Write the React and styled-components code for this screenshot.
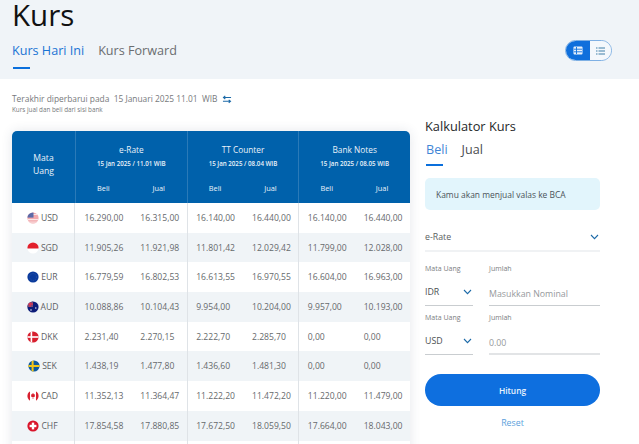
import React from 'react';
import styled, { createGlobalStyle } from 'styled-components';

const GlobalStyle = createGlobalStyle`
	html, body {
		margin: 0;
		height: 444px;
		overflow: hidden;
		background: #fff;
		font-family: 'Open Sans', 'Liberation Sans', sans-serif;
	}
	* { box-sizing: border-box; }
`;

const Page = styled.div`
	height: 444px;
	overflow: hidden;
`;

const Header = styled.header`
	height: 79px;
	background: #f0f4f8;
	padding: 0 27px 0 12px;
	display: flex;
	justify-content: space-between;
	align-items: flex-start;
`;

const HeaderLeft = styled.div`
	display: flex;
	flex-direction: column;
`;

const Title = styled.h1`
	margin: -2px 0 8px;
	font-size: 29.5px;
	line-height: 34px;
	font-weight: 400;
	color: #111;
`;

const Tabs = styled.nav`
	display: flex;
	gap: 14px;
	height: 37px;
`;

const Tab = styled.div`
	font-size: 12.6px;
	line-height: 22px;
	color: ${(p) => (p.$active ? '#1a73d4' : '#6a6d70')};
	position: relative;
	&::after {
		content: '';
		display: ${(p) => (p.$active ? 'block' : 'none')};
		position: absolute;
		left: 1px;
		top: 27px;
		width: 17px;
		height: 2px;
		background: #0a6fdc;
	}
`;

const ViewToggle = styled.div`
	display: flex;
	width: 47px;
	height: 21px;
	border: 1px solid #7fb0e4;
	border-radius: 11px;
	overflow: hidden;
	margin-top: 40px;
`;

const ViewButton = styled.div`
	width: 24px;
	display: flex;
	align-items: center;
	justify-content: center;
	background: ${(p) => (p.$active ? '#0f6fdc' : '#f4f8fc')};
	flex: ${(p) => (p.$active ? '0 0 24px' : '1')};
`;

const Main = styled.main`
	display: flex;
	padding: 14px 0 0 12px;
`;

const LeftColumn = styled.section`
	width: 398px;
	flex: none;
`;

const UpdatedLine = styled.div`
	display: flex;
	align-items: center;
	font-size: 8.4px;
	line-height: 12px;
	color: #77797c;
`;

const SwapIcon = styled.svg`
	width: 10px;
	height: 9px;
	margin-left: 5px;
`;

const SubNote = styled.div`
	font-size: 6.3px;
	line-height: 9px;
	color: #77797c;
	margin-bottom: 17px;
`;

const TableCard = styled.div`
	border-radius: 5px 5px 0 0;
	overflow: hidden;
	box-shadow: 0 0 12px rgba(40, 60, 90, 0.12);
`;

const RateTable = styled.table`
	width: 398px;
	table-layout: fixed;
	border-collapse: separate;
	border-spacing: 0;
`;

const HeadCell = styled.th`
	background: #0061ab;
	color: #eaf2fa;
	font-weight: 400;
	padding: 0;
	font-size: 8.6px;
	vertical-align: middle;
	text-align: center;
	border-left: ${(p) => (p.$divider ? '1px solid #2a7ab8' : 'none')};
`;

const GroupTitle = styled.div`
	font-size: 8.3px;
	line-height: 12px;
	padding-top: 13px;
`;

const GroupDate = styled.div`
	font-size: 6.2px;
	line-height: 9px;
	margin-top: 2.5px;
	font-weight: 600;
	height: 12.5px;
`;

const SideHeading = styled.div`
	font-size: 8.6px;
	line-height: 13px;
	padding-bottom: 4px;
`;

const SubHead = styled(HeadCell)`
	height: 32px;
	font-size: 7.4px;
	padding-top: 2px;
`;

const Row = styled.tr`
	height: 29.7px;
	background: ${(p) => (p.$alt ? '#f0f4f7' : '#fff')};
`;

const CurrencyCell = styled.td`
	padding: 0;
	border-right: 1px solid #dfe3e7;
`;

const CurrencyInner = styled.div`
	display: flex;
	align-items: center;
	justify-content: center;
	gap: 2px;
	font-size: 8.6px;
	color: #5d6064;
	padding-right: 1px;
`;

const ValueCell = styled.td`
	padding: 0 0 0 ${(p) => (p.$divider ? 8.5 : 9.5)}px;
	font-size: 8.6px;
	color: #66696c;
	text-align: left;
	white-space: nowrap;
	border-left: ${(p) => (p.$divider ? '1px solid #dfe3e7' : 'none')};
`;

const Calculator = styled.aside`
	width: 175px;
	margin-left: 15px;
	padding-top: 24px;
`;

const CalcTitle = styled.h2`
	margin: 0;
	font-size: 12.8px;
	line-height: 18px;
	font-weight: 400;
	color: #26282a;
`;

const CalcTabs = styled.div`
	display: flex;
	gap: 14px;
	margin-top: 5px;
	height: 26px;
	padding-left: 1px;
`;

const CalcTab = styled.div`
	font-size: 12.6px;
	line-height: 20px;
	color: ${(p) => (p.$active ? '#3f86d6' : '#4b4d50')};
	position: relative;
	&::after {
		content: '';
		display: ${(p) => (p.$active ? 'block' : 'none')};
		position: absolute;
		left: 0;
		top: 24px;
		width: 17px;
		height: 2px;
		background: #0a6fdc;
	}
`;

const InfoBox = styled.div`
	margin-top: 12px;
	height: 32px;
	padding-left: 11px;
	display: flex;
	align-items: center;
	background: #e2f5fc;
	border-radius: 5px;
	font-size: 8.45px;
	color: #4a5359;
`;

const RateSelect = styled.div`
	margin-top: 15px;
	height: 27px;
	border-bottom: 2px solid #f0f2f4;
	display: flex;
	justify-content: space-between;
	align-items: center;
	padding: 0 0 2px;
	font-size: 8.8px;
	color: #5b5e61;
`;

const Chevron = styled.svg`
	width: 9px;
	height: 6px;
	margin-right: 1px;
`;

const CalcRow = styled.div`
	display: grid;
	grid-template-columns: 48px 111px;
	column-gap: 16px;
	margin-top: ${(p) => p.$top}px;
`;

const FieldLabel = styled.div`
	font-size: 7px;
	line-height: 10px;
	color: #7b7e81;
`;

const CurrencySelect = styled.div`
	height: 32px;
	padding: 5px 0 0;
	border-bottom: 1px solid #c9cdd0;
	display: flex;
	justify-content: space-between;
	align-items: center;
	font-size: 8.8px;
	color: #4c4f52;
`;

const AmountField = styled.div`
	height: 32px;
	padding-top: 14px;
	border-bottom: ${(p) => (p.$light ? '2px solid #e2e4e6' : '1px solid #c9cdd0')};
	font-size: 8.8px;
	line-height: 12px;
	color: #96999c;
`;

const SubmitButton = styled.button`
	display: block;
	width: 175px;
	height: 32px;
	margin-top: 19px;
	border: 0;
	border-radius: 16px;
	background: #0e6fdf;
	color: #eaf3fd;
	font-family: inherit;
	font-size: 8.4px;
	font-weight: 600;
`;

const ResetLink = styled.div`
	margin-top: 11px;
	text-align: center;
	font-size: 8.8px;
	line-height: 12px;
	color: #5b9fdc;
`;

const FlagSvg = styled.svg`
	width: 12px;
	height: 12px;
	flex: none;
`;

const flags = {
	USD: (
		<>
			<rect width="12" height="12" fill="#f2a9ad" />
			<rect y="2" width="12" height="1" fill="#fbe6e6" />
			<rect y="7" width="12" height="1.2" fill="#fbe6e6" />
			<rect y="9.6" width="12" height="1" fill="#fbe6e6" />
			<rect width="6.5" height="5.6" fill="#5b6aa8" />
		</>
	),
	SGD: (
		<>
			<rect width="12" height="12" fill="#fff" />
			<rect width="12" height="6.5" fill="#e2202c" />
		</>
	),
	EUR: (
		<>
			<rect width="12" height="12" fill="#0a3a9c" />
			<circle cx="6" cy="6" r="3.4" fill="none" stroke="#2c55a8" strokeWidth="1" strokeDasharray="1 1" />
		</>
	),
	AUD: (
		<>
			<rect width="12" height="12" fill="#0c1c78" />
			<rect width="6" height="6" fill="#7a4a78" />
			<rect y="2.4" width="6" height="1.2" fill="#e8324a" />
			<rect x="2.4" width="1.2" height="6" fill="#e8324a" />
			<circle cx="8.8" cy="7" r="0.8" fill="#e6e6f0" />
			<circle cx="4" cy="9" r="0.8" fill="#e6e6f0" />
		</>
	),
	DKK: (
		<>
			<rect width="12" height="12" fill="#d8202f" />
			<rect x="3.6" width="1.6" height="12" fill="#fff" />
			<rect y="5.2" width="12" height="1.6" fill="#fff" />
		</>
	),
	SEK: (
		<>
			<rect width="12" height="12" fill="#0d5a9e" />
			<rect x="3.6" width="2" height="12" fill="#f2c619" />
			<rect y="5" width="12" height="2" fill="#f2c619" />
		</>
	),
	CAD: (
		<>
			<rect width="12" height="12" fill="#fff" />
			<rect width="3" height="12" fill="#d8202f" />
			<rect x="9" width="3" height="12" fill="#d8202f" />
			<path d="M6 2.8 7 4.6 8 4.3 7.6 7 6.3 7V9H5.7V7L4.4 7 4 4.3 5 4.6Z" fill="#d8202f" />
		</>
	),
	CHF: (
		<>
			<rect width="12" height="12" fill="#d9142a" />
			<rect x="4.8" y="2.6" width="2.4" height="6.8" fill="#fff" />
			<rect x="2.6" y="4.8" width="6.8" height="2.4" fill="#fff" />
		</>
	),
};

const Flag = ({ code }) => (
	<FlagSvg viewBox="0 0 12 12">
		<clipPath id={`clip-${code}`}>
			<circle cx="6" cy="6" r="5.6" />
		</clipPath>
		<g clipPath={`url(#clip-${code})`}>{flags[code]}</g>
	</FlagSvg>
);

const ChevronDown = () => (
	<Chevron viewBox="0 0 9 6">
		<path d="M1 1 4.5 4.6 8 1" fill="none" stroke="#1c6aa8" strokeWidth="1.1" />
	</Chevron>
);

const rates = [
	['USD', '16.290,00', '16.315,00', '16.140,00', '16.440,00', '16.140,00', '16.440,00'],
	['SGD', '11.905,26', '11.921,98', '11.801,42', '12.029,42', '11.799,00', '12.028,00'],
	['EUR', '16.779,59', '16.802,53', '16.613,55', '16.970,55', '16.604,00', '16.963,00'],
	['AUD', '10.088,86', '10.104,43', '9.954,00', '10.204,00', '9.957,00', '10.193,00'],
	['DKK', '2.231,40', '2.270,15', '2.222,70', '2.285,70', '0,00', '0,00'],
	['SEK', '1.438,19', '1.477,80', '1.436,60', '1.481,30', '0,00', '0,00'],
	['CAD', '11.352,13', '11.364,47', '11.222,20', '11.472,20', '11.220,00', '11.479,00'],
	['CHF', '17.854,58', '17.880,85', '17.672,50', '18.059,50', '17.664,00', '18.043,00'],
];

const groups = [
	['e-Rate', '15 Jan 2025 / 11.01 WIB'],
	['TT Counter', '15 Jan 2025 / 08.04 WIB'],
	['Bank Notes', '15 Jan 2025 / 08.05 WIB'],
];

export default function App() {
	return (
		<Page>
			<GlobalStyle />
			<Header>
				<HeaderLeft>
					<Title>Kurs</Title>
					<Tabs>
						<Tab $active>Kurs Hari Ini</Tab>
						<Tab>Kurs Forward</Tab>
					</Tabs>
				</HeaderLeft>
				<ViewToggle>
					<ViewButton $active>
						<svg width="10" height="9" viewBox="0 0 10 9">
							<rect x="0.5" y="0.5" width="9" height="8" rx="1" fill="#e8f1fb" />
							<path d="M3.5 1V8M1 3.2H9M1 5.8H9" stroke="#0f6fdc" strokeWidth="0.9" />
						</svg>
					</ViewButton>
					<ViewButton>
						<svg width="9" height="8" viewBox="0 0 9 8">
							<path d="M0 1H1.5M0 4H1.5M0 7H1.5M2.5 1H9M2.5 4H9M2.5 7H9" stroke="#3f7fa8" strokeWidth="1" />
						</svg>
					</ViewButton>
				</ViewToggle>
			</Header>
			<Main>
				<LeftColumn>
					<UpdatedLine>
						Terakhir diperbarui pada&nbsp; 15 Januari 2025 11.01&nbsp; WIB
						<SwapIcon viewBox="0 0 11 10">
							<path d="M10 2.8H2M3.6 1 1.6 2.8 3.6 4.4M1 7H9M7.4 5.4 9.4 7 7.4 8.8" fill="none" stroke="#1c6aa8" strokeWidth="1.2" />
						</SwapIcon>
					</UpdatedLine>
					<SubNote>Kurs jual dan beli dari sisi bank</SubNote>
					<TableCard>
						<RateTable>
							<colgroup>
								<col style={{ width: 63 }} />
								<col span={6} />
							</colgroup>
							<thead>
								<tr>
									<HeadCell rowSpan={2}>
										<SideHeading>
											Mata
											<br />
											Uang
										</SideHeading>
									</HeadCell>
									{groups.map(([name, date]) => (
										<HeadCell key={name} colSpan={2} $divider>
											<GroupTitle>{name}</GroupTitle>
											<GroupDate>{date}</GroupDate>
										</HeadCell>
									))}
								</tr>
								<tr>
									{groups.map(([name]) => (
										<React.Fragment key={name}>
											<SubHead $divider>Beli</SubHead>
											<SubHead>Jual</SubHead>
										</React.Fragment>
									))}
								</tr>
							</thead>
							<tbody>
								{rates.map(([code, ...values], i) => (
									<Row key={code} $alt={i % 2 === 1}>
										<CurrencyCell>
											<CurrencyInner>
												<Flag code={code} />
												{code}
											</CurrencyInner>
										</CurrencyCell>
										{values.map((value, j) => (
											<ValueCell key={j} $divider={j === 2 || j === 4}>
												{value}
											</ValueCell>
										))}
									</Row>
								))}
								{/* next row is below the fold, only its dividers show */}
								<Row>
									<CurrencyCell />
									{[0, 1, 2, 3, 4, 5].map((j) => (
										<ValueCell key={j} $divider={j === 2 || j === 4} />
									))}
								</Row>
							</tbody>
						</RateTable>
					</TableCard>
				</LeftColumn>
				<Calculator>
					<CalcTitle>Kalkulator Kurs</CalcTitle>
					<CalcTabs>
						<CalcTab $active>Beli</CalcTab>
						<CalcTab>Jual</CalcTab>
					</CalcTabs>
					<InfoBox>Kamu akan menjual valas ke BCA</InfoBox>
					<RateSelect>
						e-Rate
						<ChevronDown />
					</RateSelect>
					<CalcRow $top={12}>
						<div>
							<FieldLabel>Mata Uang</FieldLabel>
							<CurrencySelect>
								IDR
								<ChevronDown />
							</CurrencySelect>
						</div>
						<div>
							<FieldLabel>Jumlah</FieldLabel>
							<AmountField>Masukkan Nominal</AmountField>
						</div>
					</CalcRow>
					<CalcRow $top={7}>
						<div>
							<FieldLabel>Mata Uang</FieldLabel>
							<CurrencySelect>
								USD
								<ChevronDown />
							</CurrencySelect>
						</div>
						<div>
							<FieldLabel>Jumlah</FieldLabel>
							<AmountField $light>0.00</AmountField>
						</div>
					</CalcRow>
					<SubmitButton>Hitung</SubmitButton>
					<ResetLink>Reset</ResetLink>
				</Calculator>
			</Main>
		</Page>
	);
}
